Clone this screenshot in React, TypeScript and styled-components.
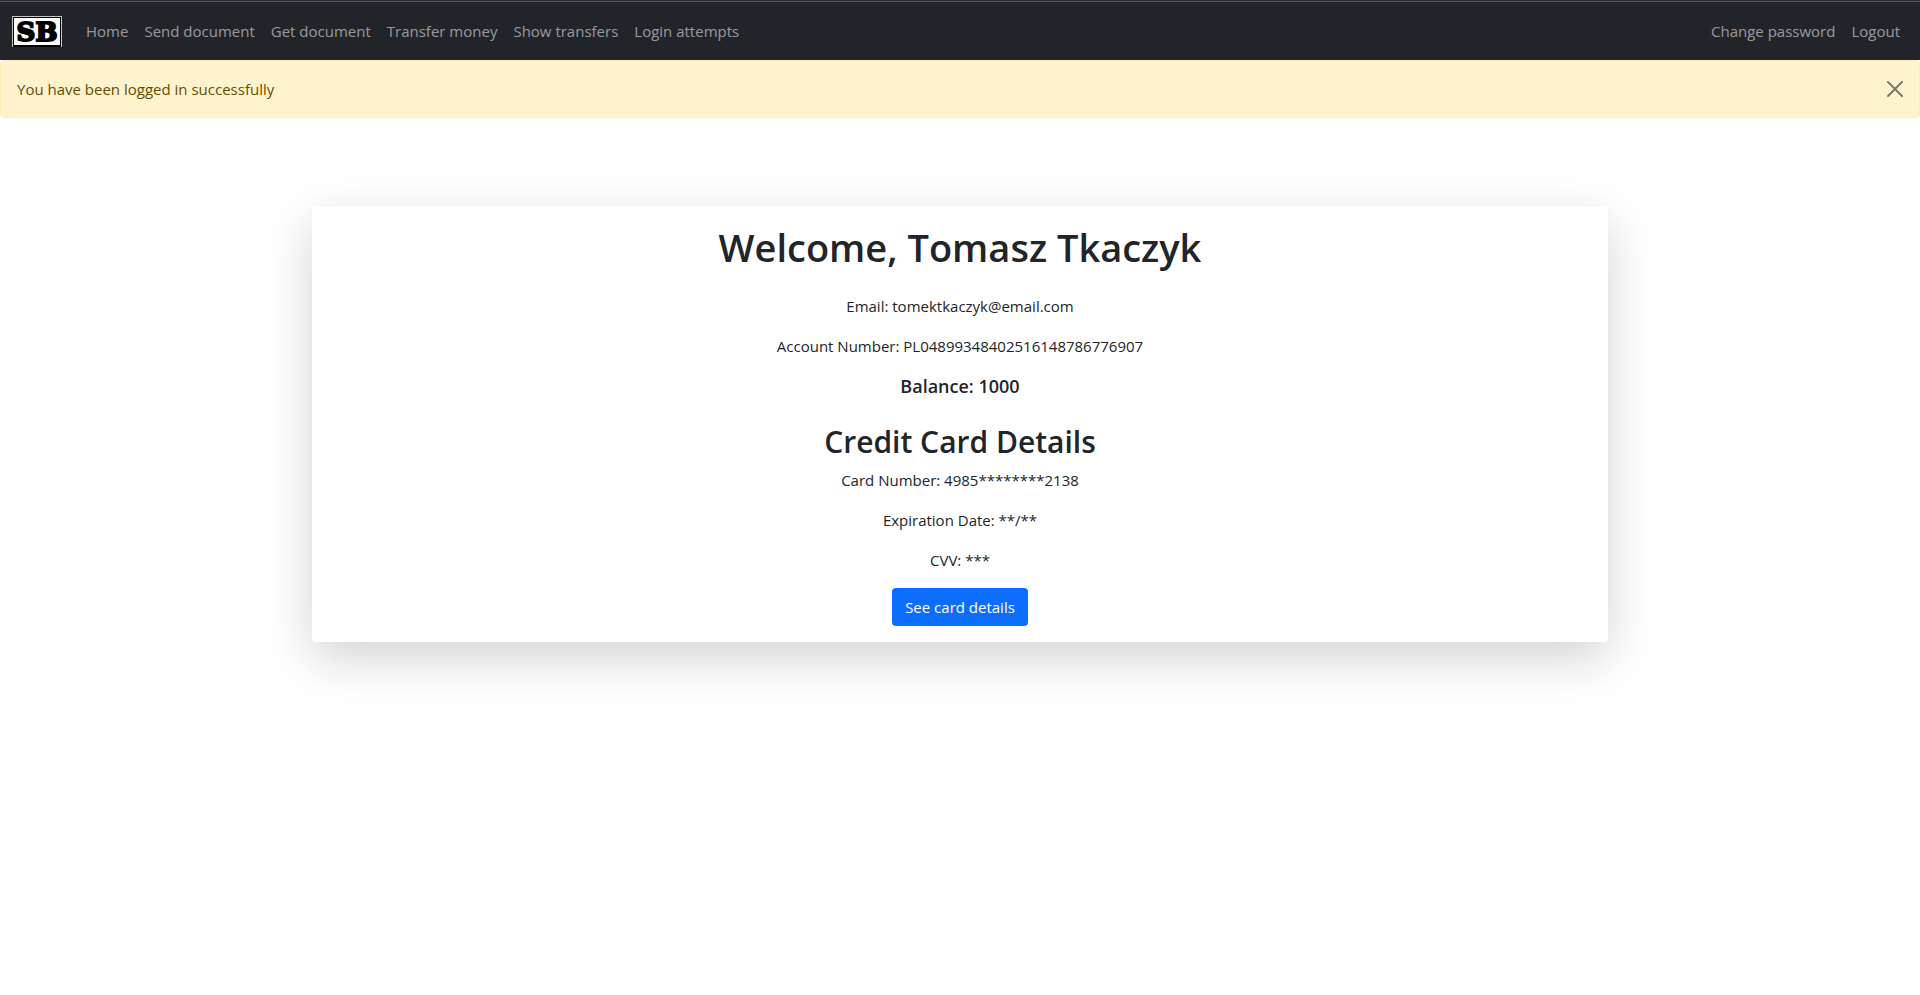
import React, { useState } from "react";
import styled, { createGlobalStyle } from "styled-components";

const GlobalStyle = createGlobalStyle`
  *, *::before, *::after { box-sizing: border-box; }
  body {
    margin: 0;
    background: #fff;
    color: #212529;
    font-family: "Segoe UI", "Open Sans", "Noto Sans", sans-serif;
    font-size: 15px;
    line-height: 24px;
  }
`;

const Page = styled.div`
  min-height: 100vh;
`;

const Navbar = styled.nav`
  display: flex;
  align-items: center;
  height: 60px;
  padding: 1px 12px 0;
  background: #212529;
  border-top: 1px solid #2b2b2f;
  box-shadow: inset 0 1px 0 #57575b;
`;

const Brand = styled.a`
  display: block;
  height: 31px;
  margin-right: 16px;
`;

const NavList = styled.ul<{ $end?: boolean }>`
  display: flex;
  list-style: none;
  margin: 0;
  margin-left: ${(p) => (p.$end ? "auto" : "0")};
  padding: 0;
`;

const NavLink = styled.a`
  display: block;
  padding: 8px;
  color: rgba(255, 255, 255, 0.55);
  text-decoration: none;
  white-space: nowrap;
`;

const Alert = styled.div`
  display: flex;
  align-items: center;
  justify-content: space-between;
  height: 58px;
  padding: 0 12px 0 16px;
  color: #664d03;
  background: #fff3cd;
  border: 1px solid #ffecb5;
  border-radius: 4px;
`;

const CloseButton = styled.button`
  display: flex;
  padding: 4px;
  border: 0;
  background: transparent;
  color: #000;
  opacity: 0.5;
  cursor: pointer;
`;

const Container = styled.main`
  max-width: 1320px;
  margin: 88px auto 0;
  padding: 0 12px;
`;

const Card = styled.section`
  display: flex;
  flex-direction: column;
  align-items: center;
  padding: 16px;
  background: #fff;
  border-radius: 4px;
  box-shadow: 0 16px 48px rgba(0, 0, 0, 0.175);
  text-align: center;
`;

const Title = styled.h1`
  margin: 0 0 22px;
  font-size: 38px;
  font-weight: 600;
  line-height: 50px;
`;

const Subtitle = styled.h2`
  margin: 8px 0 6px;
  font-size: 30px;
  font-weight: 600;
  line-height: 40px;
`;

const Detail = styled.p<{ $strong?: boolean }>`
  margin: 0 0 16px;
  font-size: ${(p) => (p.$strong ? "18px" : "15px")};
  font-weight: ${(p) => (p.$strong ? 600 : 400)};
`;

const PrimaryButton = styled.button`
  height: 38px;
  padding: 0 13px;
  border: 0;
  border-radius: 4px;
  background: #0d6efd;
  color: #fff;
  font: inherit;
  cursor: pointer;
`;

const mainLinks = [
  "Home",
  "Send document",
  "Get document",
  "Transfer money",
  "Show transfers",
  "Login attempts",
];
const accountLinks = ["Change password", "Logout"];

function Logo() {
  return (
    <svg width="50" height="31" viewBox="0 0 50 31" role="img" aria-label="SB">
      <rect width="50" height="31" fill="#c4c4c4" />
      <rect x="1" y="1" width="48" height="30" fill="#000" />
      <rect x="2" y="2" width="46" height="27" fill="#fff" />
      <text
        x="25"
        y="25"
        textAnchor="middle"
        fontFamily="DejaVu Serif, serif"
        fontWeight="700"
        fontSize="26"
        stroke="#000"
        strokeWidth="2"
      >
        SB
      </text>
    </svg>
  );
}

function Links({ items, end }: { items: string[]; end?: boolean }) {
  return (
    <NavList $end={end}>
      {items.map((item) => (
        <li key={item}>
          <NavLink href="#">{item}</NavLink>
        </li>
      ))}
    </NavList>
  );
}

export default function App() {
  const [alertOpen, setAlertOpen] = useState(true);
  return (
    <Page>
      <GlobalStyle />
      <Navbar>
        <Brand href="#">
          <Logo />
        </Brand>
        <Links items={mainLinks} />
        <Links items={accountLinks} end />
      </Navbar>
      {alertOpen && (
        <Alert role="alert">
          You have been logged in successfully
          <CloseButton aria-label="Close" onClick={() => setAlertOpen(false)}>
            <svg width="16" height="16" viewBox="0 0 16 16" fill="currentColor">
              <path d="M.293.293a1 1 0 011.414 0L8 6.586 14.293.293a1 1 0 111.414 1.414L9.414 8l6.293 6.293a1 1 0 01-1.414 1.414L8 9.414l-6.293 6.293a1 1 0 01-1.414-1.414L6.586 8 .293 1.707a1 1 0 010-1.414z" />
            </svg>
          </CloseButton>
        </Alert>
      )}
      <Container>
        <Card>
          <Title>Welcome, Tomasz Tkaczyk</Title>
          <Detail>Email: tomektkaczyk@email.com</Detail>
          <Detail>Account Number: PL04899348402516148786776907</Detail>
          <Detail $strong>Balance: 1000</Detail>
          <Subtitle>Credit Card Details</Subtitle>
          <Detail>Card Number: 4985********2138</Detail>
          <Detail>Expiration Date: **/**</Detail>
          <Detail>CVV: ***</Detail>
          <PrimaryButton type="button">See card details</PrimaryButton>
        </Card>
      </Container>
    </Page>
  );
}
